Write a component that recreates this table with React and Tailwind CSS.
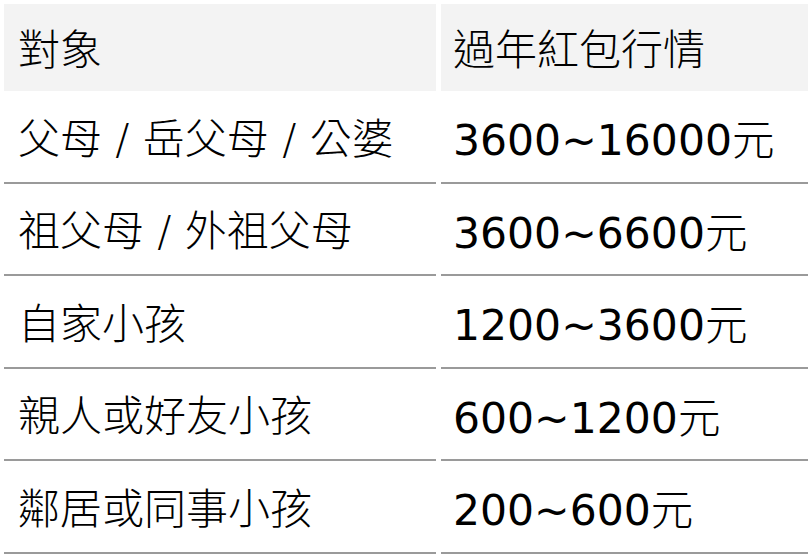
export default function App() {
  const rows = [
    ["父母 / 岳父母 / 公婆", "3600~16000"],
    ["祖父母 / 外祖父母", "3600~6600"],
    ["自家小孩", "1200~3600"],
    ["親人或好友小孩", "600~1200"],
    ["鄰居或同事小孩", "200~600"],
  ];
  return (
    <div className="w-[812px] h-[557px] bg-white p-[4px] text-black font-['DejaVu_Sans','Noto_Sans_CJK_TC',sans-serif]">
      <div className="flex gap-[5px] h-[87px]">
        <div className="w-[432px] bg-[#f3f3f3] flex items-center pl-[14px] pb-[3px] text-[42px] font-light font-['Noto_Sans_CJK_TC',sans-serif]">
          對象
        </div>
        <div className="w-[367px] bg-[#f3f3f3] flex items-center pl-[12px] pb-[3px] text-[42px] font-light font-['Noto_Sans_CJK_TC',sans-serif]">
          過年紅包行情
        </div>
      </div>
      {rows.map(([a, b], i) => (
        <div key={i} className="flex gap-[5px] h-[92.5px] pt-[2px]">
          <div className="w-[432px] border-b-2 border-[#9a9a9a] flex items-center pl-[14px] pt-[4px] text-[42px] font-light whitespace-pre">
            {a}
          </div>
          <div className="w-[367px] border-b-2 border-[#9a9a9a] flex items-center pl-[12px] pt-[4px] text-[42.5px]">
            <span>
              {b}
              <span className="font-light font-['Noto_Sans_CJK_TC',sans-serif]">元</span>
            </span>
          </div>
        </div>
      ))}
    </div>
  );
}
